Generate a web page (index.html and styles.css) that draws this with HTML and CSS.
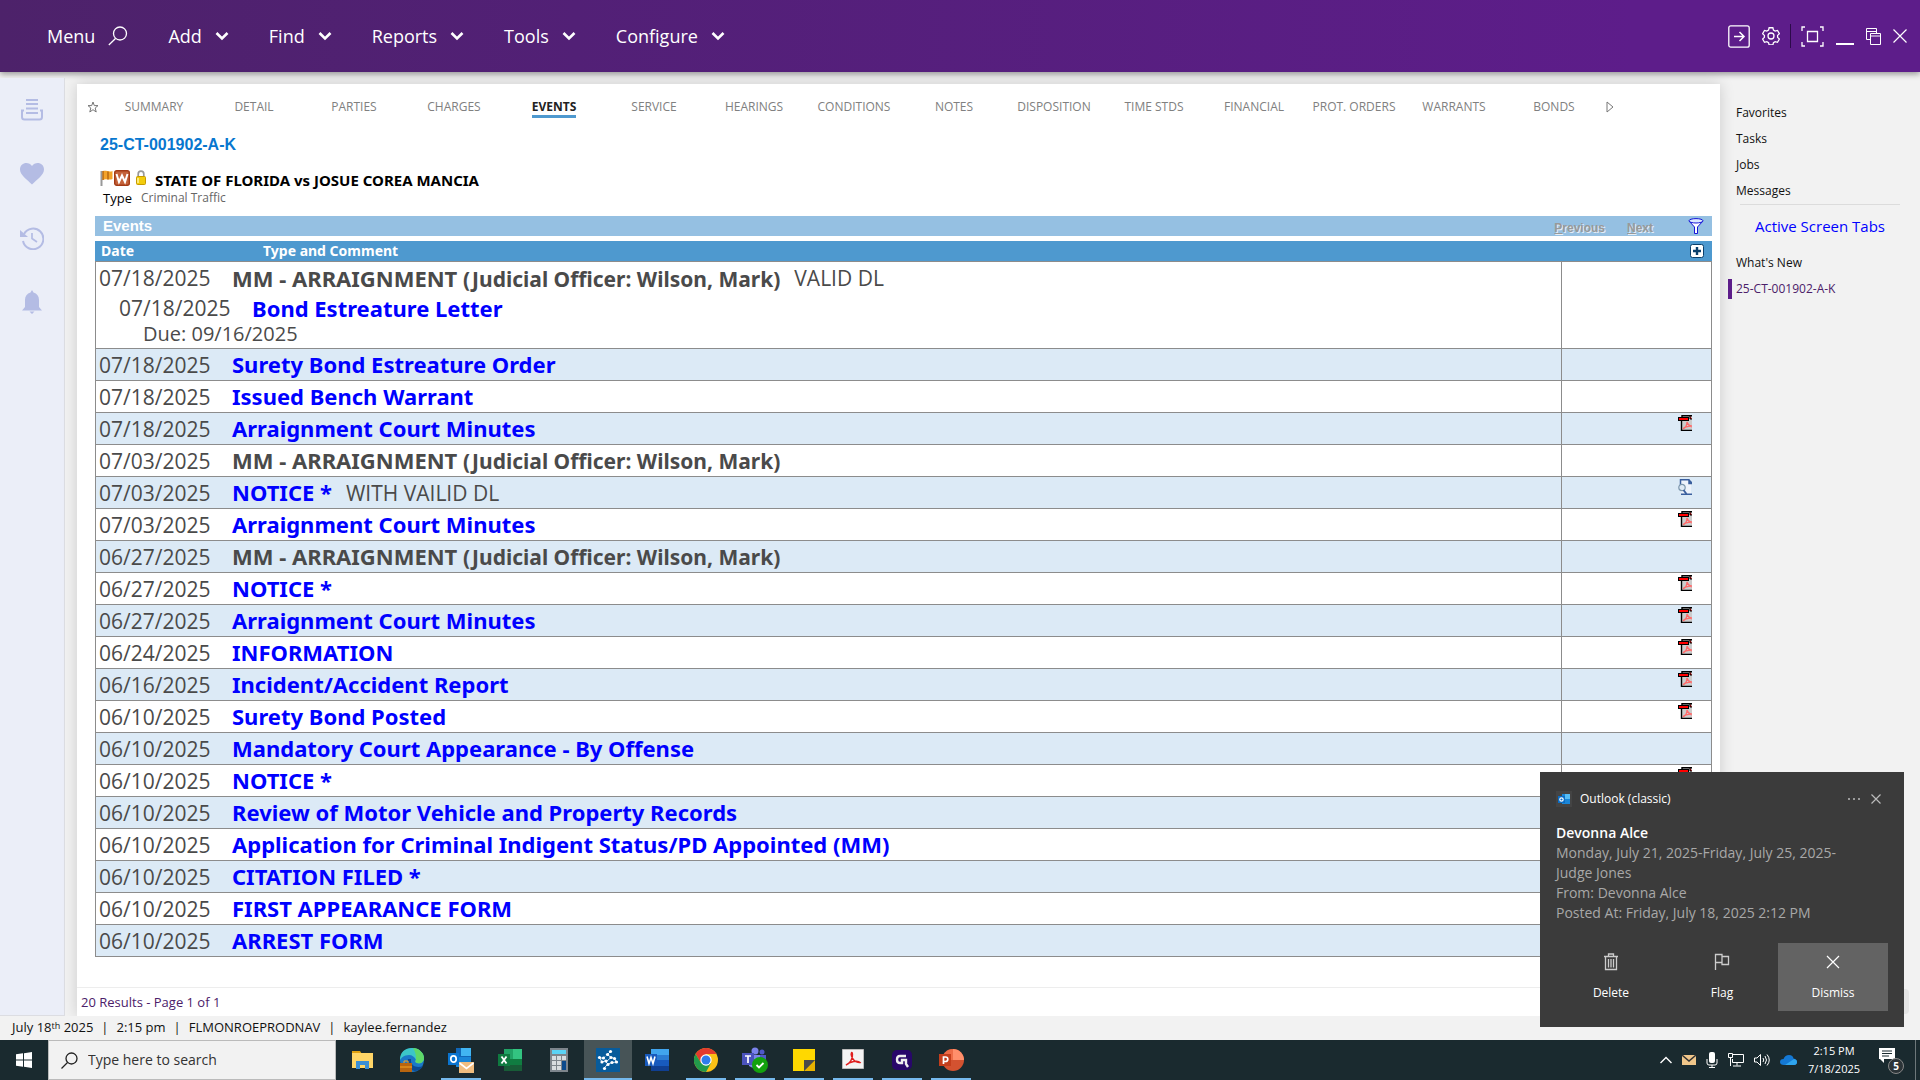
FILE: index.html
```html
<!DOCTYPE html>
<html lang="en">
<head>
<meta charset="utf-8">
<title>25-CT-001902-A-K - Events</title>
<link rel="stylesheet" href="styles.css">
</head>
<body>
<svg class="defs" aria-hidden="true">
  <symbol id="chevron" viewBox="0 0 14 10"><path d="M1.500 2 7 7.500 12.500 2" fill="none" stroke="#fff" stroke-width="2.600"/></symbol>
  <symbol id="pdf" viewBox="0 0 14 16">
    <path d="M4 .5h10V16H3V4z" fill="#ccc"/><path d="M14 15.500H3.500V4M4 3V.7h10" fill="none" stroke="#000" stroke-width="1.400"/>
    <path d="M12 1v3h2" fill="#f00" stroke="#000"/><rect x=".5" y="2.500" width="10" height="3" fill="#f00" stroke="#000"/>
    <path d="M5 14c2-1 4-4 4-7 .5 2 2 4 5 5M5 14c1-2 5-3 9-3" fill="none" stroke="#ff6a6a" stroke-width="1.300"/>
  </symbol>
  <symbol id="doc" viewBox="0 0 14 16">
    <path d="M3 1h8l2 3v11H3z" fill="#eef3fb"/><path d="M2.500 6V.7h8.500M11 .5v4h3M3 15.300h11" fill="none" stroke="#3a5f9e" stroke-width="1.500"/>
    <path d="M11 0l3 3v2h-3z" fill="#3a5f9e"/><circle cx="4" cy="8.500" r="3.200" fill="#dfeaf5" stroke="#7d97ad" stroke-width="1.200"/><path d="M5.500 11l3 4" stroke="#3a5f9e" stroke-width="1.800"/>
  </symbol>
</svg>

<header class="topbar">
  <nav class="menu">
    <button type="button">Menu <svg width="20" height="20" viewBox="0 0 20 20"><circle cx="12" cy="7.500" r="6.500" fill="none" stroke="#fff" stroke-width="1.300"/><path d="M7.500 12.500.8 19" stroke="#fff" stroke-width="1.300"/></svg></button>
    <button type="button">Add <svg width="14" height="10"><use href="#chevron"/></svg></button>
    <button type="button">Find <svg width="14" height="10"><use href="#chevron"/></svg></button>
    <button type="button">Reports <svg width="14" height="10"><use href="#chevron"/></svg></button>
    <button type="button">Tools <svg width="14" height="10"><use href="#chevron"/></svg></button>
    <button type="button">Configure <svg width="14" height="10"><use href="#chevron"/></svg></button>
  </nav>
  <div class="window-tools">
    <button type="button" aria-label="Sign out"><svg width="22" height="23" viewBox="0 0 22 23"><rect x=".8" y=".8" width="20.400" height="21.400" rx="2" fill="none" stroke="#fff" stroke-width="1.300"/><path d="M6 11.500h10M11.500 7l4.500 4.500-4.500 4.500" fill="none" stroke="#fff" stroke-width="1.500"/></svg></button>
    <button type="button" aria-label="Settings"><svg width="18" height="18" viewBox="0 0 24 24" fill="none" stroke="#fff" stroke-width="1.700"><circle cx="12" cy="12" r="4"/><path d="M9.500 1h5l.8 3.200 2.200 1.300 3.200-.9 2.500 4.300-2.400 2.300v2.600l2.400 2.300-2.500 4.300-3.200-.9-2.200 1.300-.8 3.200h-5l-.8-3.200-2.200-1.300-3.200.9L.8 16.100l2.400-2.300v-2.600L.8 8.900l2.500-4.300 3.200.9 2.200-1.300z"/></svg></button>
    <span class="divider"></span>
    <button type="button" aria-label="Full screen"><svg width="23" height="21" viewBox="0 0 23 21" fill="none" stroke="#fff" stroke-width="1.300"><path d="M1 5V1h3M19 1h3v4M22 16v4h-3M4 20H1v-4M6.500 5.500h10v10h-10z"/></svg></button>
    <button type="button" aria-label="Minimize"><svg width="18" height="18"><path d="M0 17h18" stroke="#fff" stroke-width="2"/></svg></button>
    <button type="button" aria-label="Restore"><svg width="15" height="17" viewBox="0 0 15 17" fill="none" stroke="#fff"><path d="M4 11.500H.5V.5h10V5M.5 3.500h10M4.500 5.500h10v11h-10zM4.500 8h10"/></svg></button>
    <button type="button" aria-label="Close"><svg width="14" height="14"><path d="M.5.5l13 13m0-13l-13 13" stroke="#fff" stroke-width="1.200"/></svg></button>
  </div>
</header>

<div class="workspace">
  <nav class="rail">
    <button type="button" aria-label="Queue"><svg width="24" height="24" viewBox="0 0 24 24" fill="none" stroke="#b4bce4"><path d="M6 2h12M6 6h12M6 10.500h12M6 15h12" stroke-width="2"/><path d="M4 12.500H2V19q0 2.500 2.500 2.500h15Q22 21.500 22 19v-6.500h-2" stroke-width="2"/></svg></button>
    <button type="button" aria-label="Favorites"><svg width="24" height="24" viewBox="0 0 24 24" fill="#b4bce4"><path d="M12 22.500C7 17.500 0 13 0 7.500 0 0 9-1 12 4c3-5 12-4 12 3.500 0 5.500-7 10-12 15z"/></svg></button>
    <button type="button" aria-label="History"><svg width="24" height="24" viewBox="0 0 24 24" fill="none" stroke="#b4bce4"><path d="M4 8a10.300 10.300 0 1 1-1 7" stroke-width="2"/><path d="M0 4v7h8z" fill="#b4bce4" stroke="none"/><path d="M12 7v5.500l5 3.500" stroke-width="1.700"/></svg></button>
    <button type="button" aria-label="Notifications"><svg width="24" height="24" viewBox="0 0 24 24" fill="#b4bce4"><path d="M12 0l1.500 2.500C17 3.500 19 6 19 10v7l3 3.500H2L5 17v-7c0-4 2-6.500 5.500-7.500zM9.500 21.500h5L12 24z"/></svg></button>
  </nav>

  <main class="card">
    <nav class="tabs">
      <button type="button" class="star" aria-label="Add to favorites"><svg width="12" height="12" viewBox="0 0 12 12"><path d="M6 1l1.300 3.600H11L8.200 7l1 4L6 8.700 2.800 11l1-4L1 4.600h3.700z" fill="none" stroke="#777"/></svg></button>
      <a href="#">SUMMARY</a><a href="#">DETAIL</a><a href="#">PARTIES</a><a href="#">CHARGES</a><a href="#" class="current"><span>EVENTS</span></a><a href="#">SERVICE</a><a href="#">HEARINGS</a><a href="#">CONDITIONS</a><a href="#">NOTES</a><a href="#">DISPOSITION</a><a href="#">TIME STDS</a><a href="#">FINANCIAL</a><a href="#">PROT. ORDERS</a><a href="#">WARRANTS</a><a href="#">BONDS</a>
      <button type="button" class="more" aria-label="More tabs"><svg width="8" height="12"><path d="M1 1l6 5-6 5z" fill="none" stroke="#777"/></svg></button>
    </nav>

    <div class="content">
      <a class="case-number" href="#">25-CT-001902-A-K</a>
      <div class="party">
        <svg width="13" height="16" viewBox="0 0 13 16"><path d="M1.500 1v15" stroke="#999" stroke-width="2"/><path d="M3 1c3-1 6 1.500 9.500 0v8C9 10.500 6 8 3 10z" fill="#f3a32a"/><path d="M8 1.500v8M3 1v9" stroke="#b86a10" stroke-width="1.500"/></svg>
        <svg width="16" height="16" viewBox="0 0 16 16"><rect x=".7" y=".7" width="14.600" height="14.600" rx="2" fill="#c4633b" stroke="#a33a15" stroke-width="1.400"/><path d="M2.500 4l2.500 8 3-6.500 3 6.500 2.500-8" fill="none" stroke="#fff" stroke-width="2"/></svg>
        <svg class="lock" width="10" height="15" viewBox="0 0 10 15"><path d="M2.200 8V4a2.800 2.800 0 0 1 5.600 0v4" fill="none" stroke="#999" stroke-width="1.700"/><rect x=".5" y="6.500" width="9" height="8" rx="1" fill="#f2cc0c" stroke="#c79a00"/><path d="M2 8v5" stroke="#fff6a0" stroke-width="1.500"/></svg>
        <strong>STATE OF FLORIDA vs JOSUE COREA MANCIA</strong>
      </div>
      <div class="case-type"><span>Type</span><span class="value">Criminal Traffic</span></div>

      <div class="section-bar">
        <h1>Events</h1>
        <button type="button" class="pager"><u>P</u>revious</button>
        <button type="button" class="pager"><u>N</u>ext</button>
        <button type="button" class="filter" aria-label="Filter"><svg width="16" height="16" viewBox="0 0 16 16"><path d="M1 3l5.500 6v6.500h3V9L15 3" fill="#fff" stroke="#1414d8"/><ellipse cx="8" cy="2.800" rx="7" ry="2.200" fill="#dce9ff" stroke="#1414d8"/></svg></button>
      </div>

      <table class="events">
        <thead>
          <tr><th class="date">Date</th><th class="type">Type and Comment</th><th class="docs"><button type="button" aria-label="Add event"><svg width="14" height="14"><rect x=".5" y=".5" width="13" height="13" rx="2" fill="#fff" stroke="#0b3f6b"/><path d="M7 3v8M3 7h8" stroke="#0b3f6b" stroke-width="2.400"/></svg></button></th></tr>
        </thead>
        <tbody>
          <tr class="hearing">
            <td colspan="2">
              <div class="line"><span class="when">07/18/2025</span><b>MM - ARRAIGNMENT <small>(Judicial Officer: Wilson, Mark)</small></b><span class="comment">VALID DL</span></div>
              <div class="line sub"><span class="when">07/18/2025</span><a href="#">Bond Estreature Letter</a></div>
              <div class="due">Due: 09/16/2025</div>
            </td>
            <td class="docs"></td>
          </tr>
          <tr><td>07/18/2025</td><td><a href="#">Surety Bond Estreature Order</a></td><td class="docs"></td></tr>
          <tr><td>07/18/2025</td><td><a href="#">Issued Bench Warrant</a></td><td class="docs"></td></tr>
          <tr><td>07/18/2025</td><td><a href="#">Arraignment Court Minutes</a></td><td class="docs"><svg width="14" height="16"><use href="#pdf"/></svg></td></tr>
          <tr><td>07/03/2025</td><td><b>MM - ARRAIGNMENT <small>(Judicial Officer: Wilson, Mark)</small></b></td><td class="docs"></td></tr>
          <tr><td>07/03/2025</td><td><a href="#">NOTICE *</a><span class="comment">WITH VAILID DL</span></td><td class="docs"><svg width="14" height="16"><use href="#doc"/></svg></td></tr>
          <tr><td>07/03/2025</td><td><a href="#">Arraignment Court Minutes</a></td><td class="docs"><svg width="14" height="16"><use href="#pdf"/></svg></td></tr>
          <tr><td>06/27/2025</td><td><b>MM - ARRAIGNMENT <small>(Judicial Officer: Wilson, Mark)</small></b></td><td class="docs"></td></tr>
          <tr><td>06/27/2025</td><td><a href="#">NOTICE *</a></td><td class="docs"><svg width="14" height="16"><use href="#pdf"/></svg></td></tr>
          <tr><td>06/27/2025</td><td><a href="#">Arraignment Court Minutes</a></td><td class="docs"><svg width="14" height="16"><use href="#pdf"/></svg></td></tr>
          <tr><td>06/24/2025</td><td><a href="#">INFORMATION</a></td><td class="docs"><svg width="14" height="16"><use href="#pdf"/></svg></td></tr>
          <tr><td>06/16/2025</td><td><a href="#">Incident/Accident Report</a></td><td class="docs"><svg width="14" height="16"><use href="#pdf"/></svg></td></tr>
          <tr><td>06/10/2025</td><td><a href="#">Surety Bond Posted</a></td><td class="docs"><svg width="14" height="16"><use href="#pdf"/></svg></td></tr>
          <tr><td>06/10/2025</td><td><a href="#">Mandatory Court Appearance - By Offense</a></td><td class="docs"></td></tr>
          <tr><td>06/10/2025</td><td><a href="#">NOTICE *</a></td><td class="docs"><svg width="14" height="16"><use href="#pdf"/></svg></td></tr>
          <tr><td>06/10/2025</td><td><a href="#">Review of Motor Vehicle and Property Records</a></td><td class="docs"></td></tr>
          <tr><td>06/10/2025</td><td><a href="#">Application for Criminal Indigent Status/PD Appointed (MM)</a></td><td class="docs"></td></tr>
          <tr><td>06/10/2025</td><td><a href="#">CITATION FILED *</a></td><td class="docs"></td></tr>
          <tr><td>06/10/2025</td><td><a href="#">FIRST APPEARANCE FORM</a></td><td class="docs"></td></tr>
          <tr><td>06/10/2025</td><td><a href="#">ARREST FORM</a></td><td class="docs"></td></tr>
        </tbody>
      </table>
    </div>
    <footer class="results">20 Results - Page 1 of 1</footer>
  </main>

  <aside class="side">
    <a href="#">Favorites</a>
    <a href="#">Tasks</a>
    <a href="#">Jobs</a>
    <a href="#">Messages</a>
    <h2>Active Screen Tabs</h2>
    <a href="#">What's New</a>
    <a href="#" class="active">25-CT-001902-A-K</a>
    <div class="side-handle"></div>
  </aside>
</div>

<div class="status">
  <span>July 18<sup>th</sup> 2025</span><i>|</i><span>2:15 pm</span><i>|</i><span>FLMONROEPRODNAV</span><i>|</i><span>kaylee.fernandez</span>
</div>

<div class="taskbar">
  <button type="button" class="start" aria-label="Start"><svg width="16" height="16"><path d="M0 2.300l7-1v6.200H0zM8 1.200L16 0v7.500H8zM0 8.500h7v6.200l-7-1zM8 8.500h8V16l-8-1.200z" fill="#fff"/></svg></button>
  <label class="search">
    <svg width="17" height="17" viewBox="0 0 17 17" fill="none" stroke="#222" stroke-width="1.300"><circle cx="10.500" cy="6.500" r="5.500"/><path d="M6.500 10.500L.5 16.500"/></svg>
    <input type="text" placeholder="Type here to search" aria-label="Type here to search">
  </label>
  <div class="apps">
    <button type="button" aria-label="File Explorer"><svg width="24" height="24" viewBox="0 0 24 24"><path d="M1 3h8l2 3h-10z" fill="#e0a010"/><path d="M1 5h21v15H1z" fill="#ffd567"/><path d="M5 13h13v8h-4v-4H9v4H5z" fill="#3a8fd6"/></svg></button>
    <button type="button" aria-label="Edge"><svg width="26" height="26" viewBox="0 0 26 26"><circle cx="13" cy="13" r="12" fill="#1b78c8"/><path d="M1 13C1 5 6 1 13 1c7 0 12 5 12 10 0 4-3 6-7 5-2-.5-2-2-1-3-1-3-4-5-7-5-5 0-8 3-9 5z" fill="#3cc6c8"/><path d="M14 1c6 0 11 5 11 10 0 4-3 6-7 5-2-.5-2-2-1-3 0-4 0-7-3-12z" fill="#5fd868"/><path d="M9 12c-2 5 1 11 7 12 4 0 7-3 8-5-5 2-13 1-12-7z" fill="#0c4a94"/><rect x="1" y="16" width="12" height="9" fill="#b8650f"/><path d="M1 20h12M5 16v-2h4v2" stroke="#f7a520" fill="none"/></svg></button>
    <button type="button" class="open" aria-label="Outlook"><svg width="26" height="26" viewBox="0 0 26 26"><path d="M8 1h15v18H8z" fill="#1067b8"/><path d="M13 1h10v8H13z" fill="#41b5f2"/><path d="M8 10h15v10H8z" fill="#1a86d8"/><path d="M0 6h11v12H0z" fill="#0a74cf"/><ellipse cx="5.500" cy="12" rx="2.700" ry="3.200" fill="none" stroke="#fff" stroke-width="1.700"/><path d="M11 15h15v11H11z" fill="#f0bd80"/><path d="M11.500 16l7 5.500 7-5.500" fill="none" stroke="#fff" stroke-width="1.600"/></svg></button>
    <button type="button" aria-label="Excel"><svg width="25" height="24" viewBox="0 0 25 24"><path d="M6 1h18v22H6z" fill="#107c41"/><path d="M6 1h9v10H6z" fill="#21a366"/><path d="M15 1h9v10h-9z" fill="#33c481"/><path d="M6 17h18v6H6z" fill="#185c37"/><path d="M0 6h12v12H0z" fill="#0f7a40"/><path d="M3.500 8.500l5 7m0-7l-5 7" stroke="#fff" stroke-width="1.800"/></svg></button>
    <button type="button" aria-label="Calculator"><svg width="20" height="24" viewBox="0 0 20 24"><rect x="1" width="18" height="24" fill="#7d858c"/><path d="M3 2h14v4H3z" fill="#5bd3f5"/><path d="M3 8h4v4H3zM8 8h4v4H8zM13 8h4v4h-4zM3 13h4v4H3zM8 13h4v4H8zM3 18h4v4H3zM8 18h4v4H8z" fill="#d8dde0"/><path d="M13 13h4v9h-4z" fill="#0c4a8c"/></svg></button>
    <button type="button" class="open current" aria-label="Odyssey"><svg width="24" height="24" viewBox="0 0 24 24"><path d="M0 0h24v24H0z" fill="#075b9b"/><path d="M14.500 3.500l-3 3 3.500 3-4 3.500M3.500 9.500l3.500 1 2-2M3.500 9.500L6 14l3-1 3 3-2 2-2 2.500M12 16l4-1.500 4.500-.5-2-3.500-3.500-1" fill="none" stroke="#cfe3f2" stroke-width="1"/><g fill="#fff"><circle cx="14.500" cy="3.500" r="1.600"/><circle cx="11.500" cy="6.500" r="1.600"/><circle cx="15" cy="9.500" r="1.600"/><circle cx="3.500" cy="9.500" r="1.600"/><circle cx="7.500" cy="10" r="1.600"/><circle cx="6" cy="14" r="1.600"/><circle cx="10" cy="13" r="1.600"/><circle cx="12" cy="16.500" r="1.600"/><circle cx="8.500" cy="20.500" r="1.600"/><circle cx="16" cy="14.500" r="1.600"/><circle cx="20.500" cy="14" r="1.600"/><circle cx="18.500" cy="10.500" r="1.600"/></g></svg></button>
    <button type="button" aria-label="Word"><svg width="25" height="24" viewBox="0 0 25 24"><path d="M6 1h18v22H6z" fill="#185abd"/><path d="M6 1h18v6H6z" fill="#41a5ee"/><path d="M6 7h18v5H6z" fill="#2b7cd3"/><path d="M6 18h18v5H6z" fill="#103f91"/><path d="M0 6h12v12H0z" fill="#185abd"/><path d="M2 8.500l2 7 2-6 2 6 2-7" fill="none" stroke="#fff" stroke-width="1.600"/></svg></button>
    <button type="button" class="open" aria-label="Chrome"><svg width="24" height="24" viewBox="0 0 24 24"><circle cx="12" cy="12" r="12" fill="#fbc116"/><path d="M1.600 6A12 12 0 0 1 22.400 6H12L7 15z" fill="#e33b2e"/><path d="M1.600 6A12 12 0 0 0 12 24l5-9H7z" fill="#229a4b"/><circle cx="12" cy="12" r="5.700" fill="#fff"/><circle cx="12" cy="12" r="4.500" fill="#2f7cec"/></svg></button>
    <button type="button" class="open" aria-label="Teams"><svg width="26" height="26" viewBox="0 0 26 26"><circle cx="13" cy="4" r="3.500" fill="#7b83eb"/><circle cx="20" cy="5" r="2.500" fill="#5059c9"/><path d="M7 8h11v11q-5 4-11 0z" fill="#7b83eb"/><path d="M18 8h6v8h-6z" fill="#5059c9"/><path d="M0 6h12v12H0z" fill="#4b53bc"/><path d="M3 9h6M6 9v7" stroke="#fff" stroke-width="1.700"/><circle cx="18" cy="18" r="8" fill="#13a10e"/><path d="M14.500 18l2.500 2.500 4.500-4.500" fill="none" stroke="#fff" stroke-width="1.800"/></svg></button>
    <button type="button" class="open" aria-label="Sticky Notes"><svg width="22" height="22" viewBox="0 0 22 22"><path d="M0 0h22v11L11 22H0z" fill="#ffd800"/><path d="M22 11v11H11z" fill="#e8b200"/><path d="M11 11h11L11 22z" fill="#4a4a4a"/></svg></button>
    <button type="button" class="open" aria-label="Acrobat"><svg width="22" height="22" viewBox="0 0 22 22"><path d="M.5.5h21v19H.5z" fill="#f4f4f4" stroke="#bbb"/><path d="M4 16c4-1 7-7 6.500-11C10 2 8.500 4 9.500 7c1 4 5 7 8.500 6.500-2-2.500-10-1-14 2.500z" fill="none" stroke="#e02020" stroke-width="1.400"/></svg></button>
    <button type="button" class="open" aria-label="Snagit"><svg width="22" height="22" viewBox="0 0 22 22"><rect x="1" y="1" width="20" height="20" rx="5" fill="#28076a"/><path d="M15 7H9q-3 0-3 3.500T9 14h2v-3h4v4l2 3" fill="none" stroke="#eee" stroke-width="2.400"/></svg></button>
    <button type="button" class="open" aria-label="PowerPoint"><svg width="25" height="24" viewBox="0 0 25 24"><circle cx="14" cy="12" r="11" fill="#d35230"/><path d="M14 1a11 11 0 0 1 11 11H14z" fill="#ff8f6b"/><path d="M14 1v11H3A11 11 0 0 1 14 1z" fill="#ed6c47"/><path d="M0 6h12v12H0z" fill="#c43e1c"/><path d="M4.500 16V9h2q2.300 0 2.300 2.200T6.500 13.500h-2" fill="none" stroke="#fff" stroke-width="1.700"/></svg></button>
  </div>
  <div class="tray">
    <svg width="12" height="8"><path d="M.5 7L6 1.500 11.500 7" fill="none" stroke="#fff" stroke-width="1.400"/></svg>
    <svg width="14" height="12"><path d="M0 1h14v10H0z" fill="#f0c68a"/><path d="M0 1l7 6 7-6" fill="none" stroke="#333" stroke-width="1.500"/></svg>
    <svg width="12" height="16"><rect x="3" width="6" height="11" rx="2" fill="#fff"/><path d="M1 7v4q0 2 2 2h6q2 0 2-2V7M6 13v3M3 15.500h6" fill="none" stroke="#fff"/></svg>
    <svg width="16" height="14" viewBox="0 0 16 14" fill="none" stroke="#fff"><path d="M5 1.500h10.500v8H4.500V6M9 9.500v3M5 13h8M.5.500h4v4h-4zM2.500 4.500V13"/></svg>
    <svg width="16" height="14" viewBox="0 0 16 14" fill="none" stroke="#fff"><path d="M.5 5v4H3l3.500 3.500v-11L3 5zM9 5q1.500 2 0 4M11 3q3 4 0 8M13 1.500q4.500 5.500 0 11"/></svg>
    <svg width="17" height="12" viewBox="0 0 17 12"><path d="M4 11Q0 11 0 8t3.500-3Q5 1 9 1t4.500 3.500Q17 5 17 8t-3 3z" fill="#1478d4"/><path d="M5 11L14 5q3 .5 3 3t-3 3z" fill="#2fa5ee"/></svg>
    <time class="clock">2:15 PM<br>7/18/2025</time>
    <button type="button" aria-label="5 new notifications"><svg width="16" height="15"><path d="M0 0h16v11H5v4l-4-4H0z" fill="#fff"/><path d="M3 3h10M3 5.500h10M3 8h7" stroke="#1b2b30"/></svg><span class="badge">5</span></button>
  </div>
  <button type="button" class="desktop" aria-label="Show desktop"></button>
</div>

<section class="toast">
  <header>
    <svg width="16" height="16" viewBox="0 0 16 16"><path d="M0 0h16v16H0z" fill="#444"/><path d="M6 3h8v10H6z" fill="#1a86d8"/><path d="M9 3h5v5H9z" fill="#55bdf5"/><path d="M2 5h7v7H2z" fill="#0a6cc4"/><circle cx="5.500" cy="8.500" r="1.700" fill="none" stroke="#fff" stroke-width="1.200"/></svg>
    <span>Outlook (classic)</span>
    <button type="button" aria-label="More options"><svg width="12" height="12"><path d="M0 6h2M5 6h2M10 6h2" stroke="#bbb" stroke-width="1.500"/></svg></button>
    <button type="button" aria-label="Close notification"><svg width="10" height="10"><path d="M.5.500l9 9m0-9l-9 9" stroke="#bbb" stroke-width="1.200"/></svg></button>
  </header>
  <h2>Devonna Alce</h2>
  <p>Monday, July 21, 2025-Friday, July 25, 2025-<br>Judge Jones<br>From: Devonna Alce<br>Posted At: Friday, July 18, 2025 2:12 PM</p>
  <div class="actions">
    <button type="button"><svg width="16" height="18" viewBox="0 0 16 18" fill="none" stroke="#ccc"><path d="M1 3.500h14M5.500 3V1h5v2M2.500 4v12.500h11V4M5.500 6v8.500M8 6v8.500M10.500 6v8.500" stroke-width="1.300"/></svg>Delete</button>
    <button type="button"><svg width="16" height="18" viewBox="0 0 16 18" fill="none" stroke="#ccc" stroke-width="1.300"><path d="M1.500 17V1.500H8v2h6.500v8H8v-2H1.500M8 3.500v6"/></svg>Flag</button>
    <button type="button" class="hover"><svg width="16" height="18" viewBox="0 0 16 18"><path d="M2 3l12 12m0-12L2 15" stroke="#fff" stroke-width="1.200"/></svg>Dismiss</button>
  </div>
</section>
</body>
</html>
```
FILE: styles.css
```css
* { box-sizing: border-box; }
body {
  margin: 0;
  min-height: 100vh;
  display: flex;
  flex-direction: column;
  position: relative;
  background: #f2f2f2;
  color: #111;
  font: 12px/20px "Open Sans", "Noto Sans", sans-serif;
}
button {
  padding: 0;
  border: 0;
  background: none;
  color: inherit;
  font: inherit;
  display: inline-flex;
  align-items: center;
  justify-content: center;
}
a { color: inherit; text-decoration: none; }
svg { flex: none; display: block; }
.defs { position: absolute; width: 0; height: 0; }

/* top bar */
.topbar {
  height: 72px;
  padding: 0 13px 0 47px;
  display: flex;
  align-items: center;
  justify-content: space-between;
  background: linear-gradient(90deg, #4d226a, #522076 30%, #5d1d8a 85%);
  box-shadow: 0 2px 6px rgba(0, 0, 0, .4);
  color: #fff;
}
.menu { display: flex; gap: 40px; font-size: 18px; line-height: 28px; }
.menu button { gap: 13px; }
.window-tools { display: flex; align-items: center; gap: 12px; }
.divider { width: 1px; height: 24px; margin: 0 -2px; background: #2c0a4a; }

/* workspace */
.workspace { flex: 1; display: flex; }
.rail {
  width: 65px;
  margin-top: 6px;
  padding-top: 20px;
  display: flex;
  flex-direction: column;
  align-items: center;
  gap: 40px;
  background: #ebeef8;
  border: solid #dcdde2;
  border-width: 0 1px 1px 0;
}
.card {
  flex: 1;
  min-width: 0;
  margin: 12px 0 0 12px;
  display: flex;
  flex-direction: column;
  background: #fff;
  box-shadow: 0 0 14px rgba(0, 0, 0, .16);
}
.tabs {
  height: 46px;
  padding-left: 10px;
  display: flex;
  align-items: center;
  color: #808080;
}
.tabs a { width: 100px; text-align: center; }
.star { width: 12px; margin-right: 5px; }
.more { margin-left: 2px; }
.tabs .current { color: #222; font-weight: 700; padding-top: 1px; }
.current span { display: inline-block; line-height: 17px; border-bottom: 3px solid #4e99cf; }

.content { flex: 1; padding: 5px 8px 30px 18px; }
.case-number {
  display: block;
  margin-left: 5px;
  color: #0877cf;
  font: bold 16px/20px "Liberation Sans", Arial, sans-serif;
}
.party {
  height: 22px;
  margin: 13px 0 0 5px;
  display: flex;
  gap: 1px;
}
.party svg { margin-top: 2px; }
.party .lock { margin-left: 5px; }
.party strong {
  margin-left: 8px;
  padding-top: 2px;
  color: #000;
  font: bold 15px/20px "Noto Sans", sans-serif;
}
.case-type { margin-left: 8px; line-height: 16px; display: flex; gap: 9px; font-size: 13px; color: #000; }
.case-type .value { color: #666; font-size: 12px; }

.section-bar {
  height: 20px;
  margin: 10px 0 5px;
  padding: 0 8px;
  display: flex;
  align-items: center;
  background: #95c0e2;
  font: bold 12px/16px "Liberation Sans", Arial, sans-serif;
}
.section-bar h1 { margin: 0 auto 0 0; color: #fff; font-size: 15px; }
.pager { margin-right: 22px; padding-top: 3px; color: #999; text-shadow: 1px 1px #e4eef7; display: block; }
.filter { margin-left: 13px; }

/* events */
.events { width: 100%; border-spacing: 0; table-layout: fixed; color: #4a4a4a; font-size: 21px; line-height: 28px; }
.events th {
  height: 21px;
  padding: 0 0 0 6px;
  background: #4e99cf;
  border-bottom: 1px solid #8c8c8c;
  color: #fff;
  text-align: left;
  font: bold 14px/20px "Noto Sans", sans-serif;
}
.events .date { width: 137px; }
.events .type { padding-left: 31px; }
.events td {
  height: 32px;
  padding: 0 0 0 3px;
  border-bottom: 1px solid #8c8c8c;
  white-space: nowrap;
}
.events td:first-child { border-left: 1px solid #8c8c8c; }
.events .hearing td:first-child { height: 87px; }
.events td:nth-child(2):not(.docs) { padding-left: 0; }
.events tbody tr:nth-child(even) { background: #dceaf6; }
.events .docs { width: 151px; }
.events th.docs { padding: 0 8px 0 0; }
.events th.docs button { display: flex; margin-left: auto; }
.events td.docs {
  padding: 2px 19px 0 0;
  border-left: 1px solid #8c8c8c;
  border-right: 1px solid #8c8c8c;
  vertical-align: top;
}
.events td.docs svg { margin-left: auto; }
.events b, .events a { font: bold 22px/28px "Noto Sans", sans-serif; }
.events a { color: #00f; }
.events small { font-size: 21px; }
.comment { margin-left: 14px; }
.line { display: flex; align-items: center; height: 32px; }
.when { width: 133px; }
.sub { height: 28px; padding-left: 20px; }
.due { height: 26px; line-height: 24px; padding-left: 44px; font-size: 20px; }

.results {
  height: 29px;
  padding: 4px;
  border-top: 1px solid #ededed;
  color: #4b2069;
  font-size: 13px;
}

/* side list */
.side { width: 200px; padding: 31px 20px 2px 12px; display: flex; flex-direction: column; line-height: 20px; }
.side a { display: block; margin-bottom: 6px; padding-left: 4px; }
.side a:nth-of-type(4) { margin-bottom: 0; }
.side .active { border-left: 4px solid #5d1d8a; margin-left: -4px; color: #4b2069; }
.side h2 {
  margin: 3px 0 15px 8px;
  padding-top: 9px;
  border-top: 1px solid #dcdcdc;
  text-align: center;
  color: #00f;
  font-size: 15px;
  font-weight: 400;
  line-height: 24px;
}
.side-handle { width: 40px; height: 25px; margin: auto -9px 0 auto; border-radius: 4px; background: #e4e4e4; }

/* status line */
.status { height: 24px; padding-left: 12px; display: flex; gap: 8px; font-size: 13px; line-height: 22px; background: #f2f2f2; }
.status i { font-style: normal; }
.status sup { font-size: 9px; line-height: 0; vertical-align: 3px; }

/* taskbar */
.taskbar { height: 40px; display: flex; background: #1a2a2f; color: #fff; }
.start { width: 48px; }
.search {
  width: 288px;
  padding: 0 12px;
  display: flex;
  align-items: center;
  gap: 10px;
  background: #f2f2f2;
  border: 1px solid #bbb;
}
.search input { flex: 1; min-width: 0; padding: 0; border: 0; background: none; font: 14px/20px "Open Sans", sans-serif; }
.search input::placeholder { color: #333; opacity: 1; }
.apps { flex: 1; padding-left: 3px; display: flex; gap: 1px; }
.apps button { width: 48px; }
.apps .open { background: linear-gradient(#76b9ed, #76b9ed) center bottom / 40px 2px no-repeat; }
.apps .current { background: linear-gradient(#76b9ed, #76b9ed) center bottom / 48px 2px no-repeat #475457; }
.tray { display: flex; align-items: center; gap: 10px; padding-right: 12px; }
.clock { width: 54px; margin-right: 8px; text-align: center; font-size: 11px; line-height: 18px; }
.tray button { position: relative; width: 24px; height: 24px; align-items: flex-start; justify-content: flex-start; }
.badge {
  position: absolute;
  right: -1px;
  bottom: -2px;
  width: 16px;
  height: 16px;
  border: 1px solid #888;
  border-radius: 8px;
  background: #2b3337;
  font-size: 10px;
  font-weight: 700;
  line-height: 14px;
}
.desktop { width: 5px; border-left: 1px solid #6d777a; }

/* notification */
.toast {
  position: absolute;
  right: 16px;
  bottom: 53px;
  width: 364px;
  height: 255px;
  padding: 17px 16px 16px;
  display: flex;
  flex-direction: column;
  background: #3b3b3b;
  color: #fff;
}
.toast header { display: flex; align-items: center; gap: 8px; margin-bottom: 14px; padding-right: 7px; }
.toast header button:nth-of-type(1) { margin-left: auto; margin-right: 3px; }
.toast h2 { margin: 0; font-size: 14px; line-height: 20px; font-weight: 600; }
.toast p { margin: 0; color: #a8a8a8; font-size: 14px; line-height: 20px; }
.actions { display: grid; grid-template-columns: repeat(3, 1fr); gap: 1px; margin-top: auto; }
.actions button { height: 68px; padding-top: 2px; flex-direction: column; gap: 12px; }
.actions .hover { background: #636363; }
```
